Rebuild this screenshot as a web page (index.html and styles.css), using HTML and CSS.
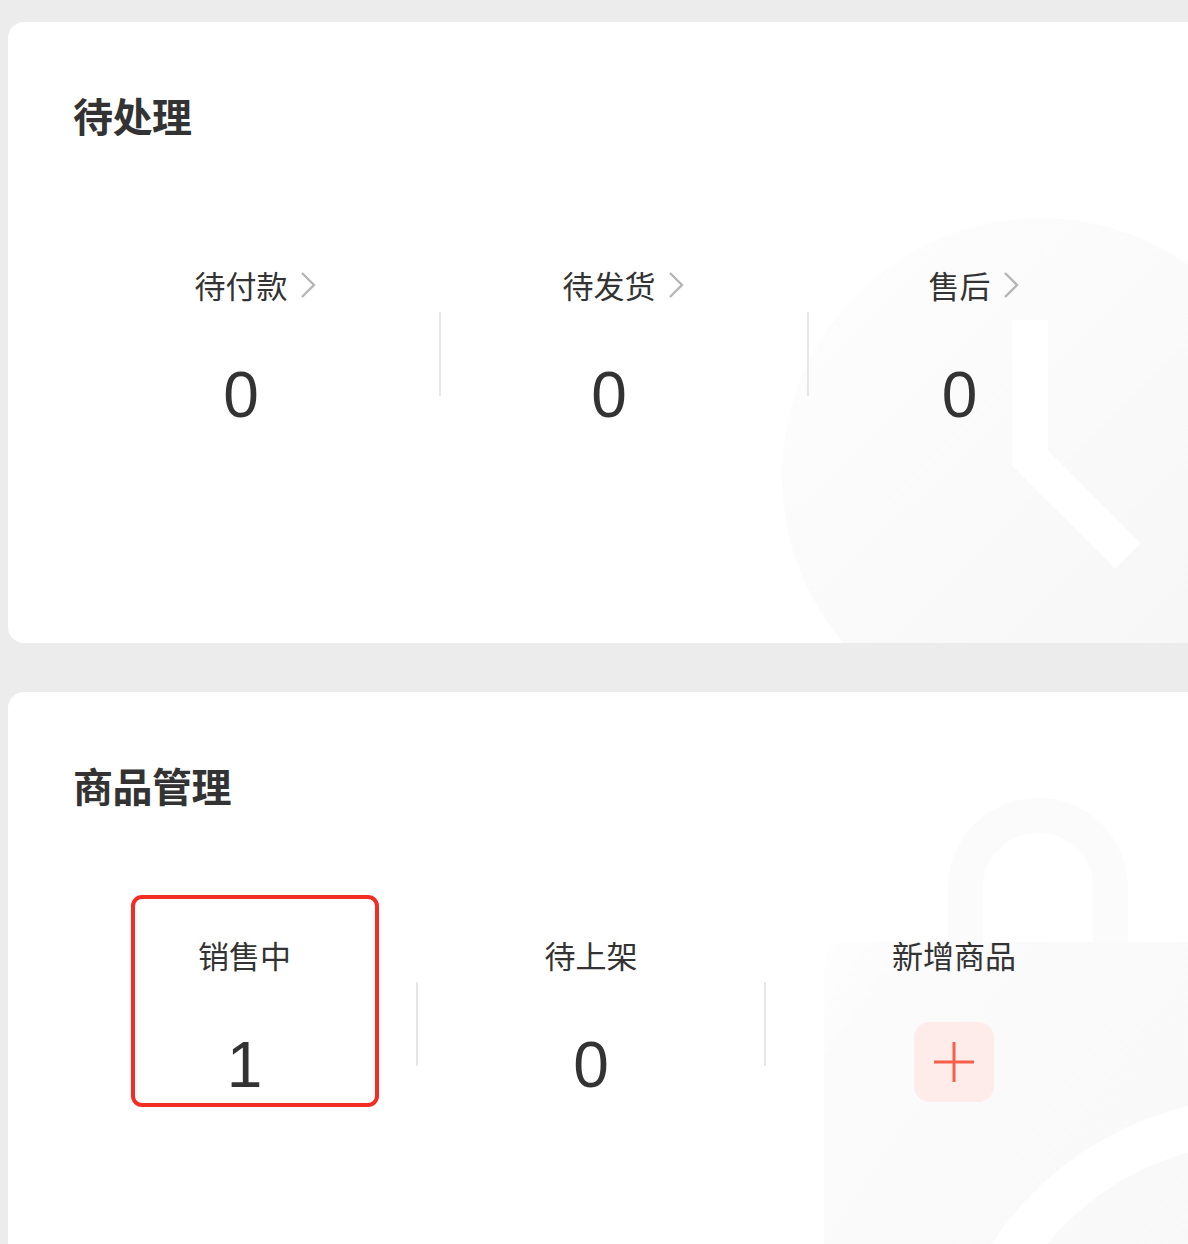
FILE: index.html
```html
<!DOCTYPE html>
<html lang="zh-CN">

<head>
    <meta charset="UTF-8">
    <meta name="viewport" content="width=device-width, initial-scale=1.0">
    <title>工作台</title>
    <link rel="stylesheet" href="styles.css">
</head>

<body>
    <div class="page">
        <!-- 待处理 -->
        <section class="card">
            <svg class="mark mark-clock" viewBox="0 0 516 516" aria-hidden="true">
                <defs>
                    <linearGradient id="clockFill" x1="0" y1="0" x2="1" y2="1">
                        <stop offset="0" stop-color="#fefefe" />
                        <stop offset="1" stop-color="#f5f5f5" />
                    </linearGradient>
                </defs>
                <circle cx="258" cy="258" r="258" fill="url(#clockFill)" />
                <path d="M248 102 V240 L346 338" fill="none" stroke="#fff" stroke-width="36" stroke-linejoin="miter" />
            </svg>

            <h2 class="card-title">待处理</h2>
            <div class="stats stats-orders">
                <div class="stat">
                    <div class="stat-label">待付款<span class="arrow"><svg viewBox="0 0 16 28"><path d="M2 2 L14 14 L2 26" /></svg></span></div>
                    <div class="stat-num">0</div>
                </div>
                <div class="stat-line"></div>
                <div class="stat">
                    <div class="stat-label">待发货<span class="arrow"><svg viewBox="0 0 16 28"><path d="M2 2 L14 14 L2 26" /></svg></span></div>
                    <div class="stat-num">0</div>
                </div>
                <div class="stat-line"></div>
                <div class="stat">
                    <div class="stat-label">售后<span class="arrow"><svg viewBox="0 0 16 28"><path d="M2 2 L14 14 L2 26" /></svg></span></div>
                    <div class="stat-num">0</div>
                </div>
            </div>
        </section>

        <!-- 商品管理 -->
        <section class="card card-goods">
            <svg class="mark mark-bag" viewBox="0 0 460 480" aria-hidden="true">
                <defs>
                    <linearGradient id="bagFill" x1="0" y1="0" x2="1" y2="0.6">
                        <stop offset="0" stop-color="#fefefe" />
                        <stop offset="0.15" stop-color="#fbfbfb" />
                        <stop offset="1" stop-color="#f8f8f8" />
                    </linearGradient>
                </defs>
                <path d="M157.5 162 V106 A72.5 72.5 0 0 1 302.5 106 V162" fill="none" stroke="#fbfbfb" stroke-width="35" />
                <rect x="16" y="160" width="460" height="400" rx="20" fill="url(#bagFill)" />
                <circle cx="454" cy="638" r="300" fill="none" stroke="#fff" stroke-width="45" />
            </svg>

            <h2 class="card-title">商品管理</h2>
            <div class="stats stats-goods">
                <div class="stat">
                    <div class="stat-label">销售中</div>
                    <div class="stat-num">1</div>
                    <div class="focus-box"></div>
                </div>
                <div class="stat-line"></div>
                <div class="stat">
                    <div class="stat-label">待上架</div>
                    <div class="stat-num">0</div>
                </div>
                <div class="stat-line"></div>
                <div class="stat">
                    <div class="stat-label">新增商品</div>
                    <div class="stat-num">
                        <span class="add-btn"><svg viewBox="0 0 40 40"><path d="M20 0 V40 M0 20 H40" /></svg></span>
                    </div>
                </div>
            </div>
        </section>
    </div>
</body>

</html>
```

FILE: styles.css
```css
* {
    box-sizing: border-box;
}

html,
body {
    margin: 0;
    overflow: hidden;
    background-color: #ececec;
}

body {
    font-family: "Liberation Sans", "Noto Sans CJK SC", sans-serif;
    color: #333;
}

.page {
    padding: 22px 0 0 8px;
    display: flex;
    flex-direction: column;
    gap: 49px;
}

.card {
    position: relative;
    width: calc(100% + 60px);
    height: 621px;
    padding: 65px 0 0 65px;
    background: #fff;
    border-radius: 16px;
    overflow: hidden;
}

.card-goods {
    height: 600px;
}

.mark {
    position: absolute;
    pointer-events: none;
}

.mark-clock {
    left: 774px;
    top: 196px;
    width: 516px;
    height: 516px;
}

.mark-bag {
    left: 800px;
    top: 90px;
    width: 460px;
    height: 480px;
}

.card-title {
    position: relative;
    margin: 0;
    font-family: "Noto Sans CJK SC", sans-serif;
    font-size: 40px;
    font-weight: 700;
    line-height: 56px;
    letter-spacing: -0.5px;
}

.stats {
    position: relative;
    display: grid;
    align-items: start;
    margin-top: 120px;
}

.stats-orders {
    grid-template-columns: 366px 2px 366px 2px 331px;
}

.stats-orders .stat {
    padding-right: 30px;
}

.stats-goods {
    grid-template-columns: 343px 2px 346px 2px 376px;
}

.stat {
    position: relative;
    display: flex;
    flex-direction: column;
    align-items: center;
}

.stat-label {
    position: relative;
    font-family: "Noto Sans CJK SC", sans-serif;
    font-size: 31px;
    line-height: 44px;
    color: #333;
}

.arrow {
    position: absolute;
    left: calc(100% + 12px);
    top: 8px;
    width: 16px;
    height: 28px;
}

.arrow svg {
    display: block;
    width: 16px;
    height: 28px;
    fill: none;
    stroke: #b5b5b5;
    stroke-width: 2.4;
}

.stat-num {
    margin-top: 48px;
    height: 80px;
    font-size: 64px;
    line-height: 80px;
    color: #333;
    display: flex;
    align-items: center;
    justify-content: center;
}

.stat-line {
    margin-top: 49px;
    height: 84px;
    background: #e6e6e6;
}

.add-btn {
    display: flex;
    align-items: center;
    justify-content: center;
    width: 80px;
    height: 80px;
    margin-top: -6px;
    background: #fdecea;
    border-radius: 16px;
}

.add-btn svg {
    width: 40px;
    height: 40px;
    fill: none;
    stroke: #f55f4b;
    stroke-width: 3;
}

.focus-box {
    position: absolute;
    left: 58px;
    top: -38px;
    width: 248px;
    height: 212px;
    border: 4px solid #f22d24;
    border-radius: 11px;
}
```
